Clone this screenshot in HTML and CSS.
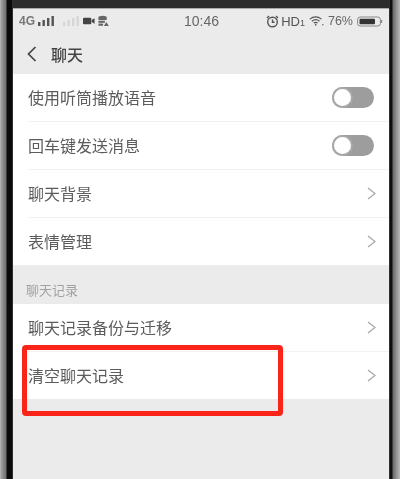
FILE: index.html
```html
<!DOCTYPE html>
<html lang="zh-CN">
<head>
  <meta charset="UTF-8" />
  <meta name="viewport" content="width=device-width, initial-scale=1.0"/>
  <title>聊天</title>
  <link rel="stylesheet" href="styles.css">
</head>
<body>
  <div class="telefone">
    <div class="borda-esq"></div>

    <div class="coluna">
      <div class="borda-topo"></div>

      <div class="tela">
        <!-- STATUS BAR -->
        <div class="status">
          <div class="status-esq">
            <span class="rede">4G</span>
            <svg class="sinal" width="16" height="10" viewBox="0 0 16 10"><rect x="0" y="6" width="2.4" height="4"/><rect x="4.5" y="4" width="2.4" height="6"/><rect x="9" y="2" width="2.4" height="8"/><rect x="13.5" y="0" width="2.4" height="10"/></svg>
            <svg class="sinal fraco" width="16" height="10" viewBox="0 0 16 10"><rect x="0" y="6" width="2.4" height="4"/><rect x="4.5" y="4" width="2.4" height="6"/><rect x="9" y="2" width="2.4" height="8"/><rect x="13.5" y="0" width="2.4" height="10"/></svg>
            <svg class="camera" width="12" height="8" viewBox="0 0 13 8"><rect x="0" y="0.5" width="9" height="7" rx="1"/><path d="M9.5 3 L12.5 1 V7 L9.5 5 Z"/></svg>
            <svg class="banco" width="11" height="12" viewBox="0 0 12 12"><ellipse cx="5" cy="2" rx="4.5" ry="1.8"/><rect x="0.5" y="2" width="9" height="3"/><rect x="0.5" y="5.8" width="7" height="2.2"/><rect x="0.5" y="8.8" width="5" height="2.4"/><path d="M6.5 11.5 L9 7 L11.8 11.5 Z"/></svg>
          </div>
          <div class="hora">10:46</div>
          <div class="status-dir">
            <svg class="alarme" width="13" height="13" viewBox="0 0 13 13"><circle cx="6.5" cy="7" r="4.8"/><path d="M6.5 4.5 V7.2 H8.6"/><path d="M1 3 L3 1 M12 3 L10 1"/></svg>
            <span class="hd">HD<small>1</small></span>
            <svg class="wifi" width="15" height="10" viewBox="0 0 18 12"><path d="M1 3.8 C5.5 0.2 10.5 0.2 15 3.8"/><path d="M3.4 6.2 C6.4 3.9 9.6 3.9 12.6 6.2"/><path d="M5.7 8.5 C7.2 7.4 8.8 7.4 10.3 8.5"/><circle cx="8" cy="10.5" r="1.1"/><circle cx="16.6" cy="10.6" r="0.9"/></svg>
            <span class="bateria-txt">76%</span>
            <svg class="bateria" width="26" height="11" viewBox="0 0 26 11"><rect x="0.6" y="1" width="22.8" height="9" rx="2.5"/><rect class="carga" x="2.5" y="2.8" width="15.5" height="5.4" rx="1"/><path class="ponta" d="M24.6 4 V7"/></svg>
          </div>
        </div>

        <!-- NAV -->
        <div class="nav">
          <svg class="voltar" width="10" height="16" viewBox="0 0 10 16"><path d="M8.5 1 L1.5 8 L8.5 15"/></svg>
          <span class="titulo">聊天</span>
        </div>

        <div class="grupo">
          <div class="linha">
            <span>使用听筒播放语音</span>
            <div class="toggle"><i></i></div>
          </div>
          <div class="linha">
            <span>回车键发送消息</span>
            <div class="toggle"><i></i></div>
          </div>
          <div class="linha">
            <span>聊天背景</span>
            <svg class="seta" width="9" height="13" viewBox="0 0 9 13"><path d="M1 1 L8 6.5 L1 12"/></svg>
          </div>
          <div class="linha">
            <span>表情管理</span>
            <svg class="seta" width="9" height="13" viewBox="0 0 9 13"><path d="M1 1 L8 6.5 L1 12"/></svg>
          </div>
        </div>

        <div class="secao">聊天记录</div>

        <div class="grupo">
          <div class="linha">
            <span>聊天记录备份与迁移</span>
            <svg class="seta" width="9" height="13" viewBox="0 0 9 13"><path d="M1 1 L8 6.5 L1 12"/></svg>
          </div>
          <div class="linha">
            <span>清空聊天记录</span>
            <svg class="seta" width="9" height="13" viewBox="0 0 9 13"><path d="M1 1 L8 6.5 L1 12"/></svg>
          </div>
        </div>

        <!-- marcacao vermelha por cima da tela -->
        <div class="marca"></div>
      </div>
    </div>

    <div class="borda-dir"></div>
  </div>
</body>
</html>
```

FILE: styles.css
```css
html, body {
  margin: 0;
  padding: 0;
  height: 479px;
  overflow: hidden;
}

body {
  font-family: 'Noto Sans CJK SC', 'Noto Sans', sans-serif;
  color: #5c5c5c;
}

/* a foto original e um pouco borrada */
.telefone {
  display: flex;
  height: 479px;
  filter: blur(0.4px);
}

.borda-esq {
  width: 13px;
  background: linear-gradient(to right, #b4b4b4 0, #8a8a8a 3px, #707070 6px, #0c0c0c 7px, #0a0a0a 12px, #555 13px);
}

.borda-dir {
  width: 11px;
  background: linear-gradient(to right, #555 0, #0c0c0c 1px, #111 3px, #6a6a6a 4px, #8c8c8c 7px, #b8b8b8 11px);
}

.coluna {
  flex: 1;
  display: flex;
  flex-direction: column;
}

.borda-topo {
  height: 9px;
  background: #2c2c2c;
  border-bottom: 1px solid #aaa;
  box-sizing: border-box;
}

.tela {
  flex: 1;
  position: relative;
  background: #ebebeb;
}

.status {
  height: 24px;
  padding: 0 6px 0 6px;
  display: flex;
  align-items: center;
  justify-content: space-between;
  position: relative;
  color: #555;
  font-family: 'Liberation Sans', sans-serif;
}

.status-esq,
.status-dir {
  display: flex;
  align-items: center;
}

.rede {
  font-size: 12px;
  font-weight: bold;
  color: #777;
  margin-right: 3px;
}

.sinal { fill: #555; margin-right: 9px; }
.sinal.fraco { fill: #d6d6d6; margin-right: 4px; }
.camera { fill: #444; margin-right: 3px; }
.banco { fill: #666; }

.hora {
  position: absolute;
  left: 171px;
  font-size: 14px;
  color: #666;
}

.alarme,
.wifi path {
  fill: none;
  stroke: #555;
  stroke-width: 1.4;
}

.alarme { margin-right: 2px; }
.wifi { fill: #666; margin-right: 4px; }

.hd {
  font-size: 13px;
  color: #555;
  margin-right: 4px;
}

.hd small { font-size: 9px; }

.bateria-txt {
  font-size: 12.5px;
  color: #666;
  margin-right: 4px;
}

.bateria rect {
  fill: none;
  stroke: #888;
  stroke-width: 1;
}

.bateria .carga {
  fill: #333;
  stroke: none;
}

.bateria .ponta {
  stroke: #888;
  stroke-width: 1.2;
}

.nav {
  height: 41px;
  padding-left: 14px;
  display: flex;
  align-items: center;
  gap: 14px;
}

.voltar {
  fill: none;
  stroke: #444;
  stroke-width: 1.7;
}

.titulo {
  font-size: 16px;
  font-weight: 500;
  color: #444;
}

.grupo {
  background: #fff;
}

.linha {
  height: 48px;
  margin-left: 15px;
  padding-right: 13px;
  padding-bottom: 1px;
  display: flex;
  align-items: center;
  justify-content: space-between;
  font-size: 16px;
  border-bottom: 1px solid #f2f2f2;
  box-sizing: border-box;
}

.linha:last-child {
  height: 47px;
  border-bottom: none;
}

.toggle {
  width: 42px;
  height: 21px;
  margin-right: 2px;
  border-radius: 11px;
  background: #9d9d9d;
  position: relative;
}

.toggle i {
  position: absolute;
  left: 0;
  top: 0;
  width: 17px;
  height: 17px;
  background: #fff;
  border: 2px solid #a8a8a8;
  border-radius: 50%;
}

.seta {
  fill: none;
  stroke: #aaa;
  stroke-width: 1.4;
}

.secao {
  height: 39px;
  padding: 10px 0 0 13px;
  box-sizing: border-box;
  display: flex;
  align-items: center;
  font-size: 13px;
  color: #a2a2a2;
}

.marca {
  position: absolute;
  left: 9px;
  top: 336px;
  width: 261px;
  height: 71px;
  box-sizing: border-box;
  border: 5px solid #fb2418;
  border-radius: 4px;
}
```
